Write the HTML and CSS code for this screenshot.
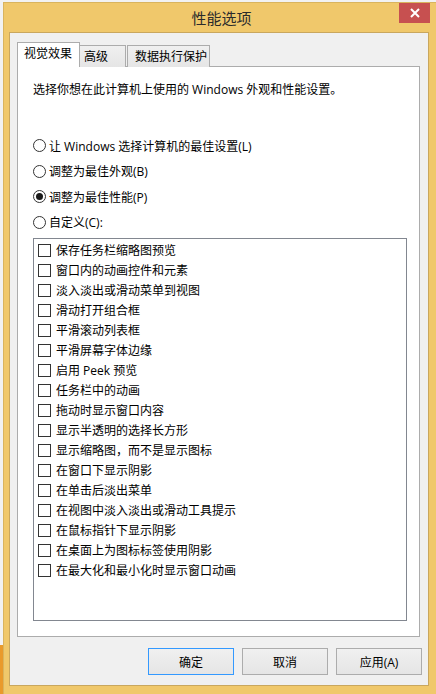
FILE: index.html
```html
<!DOCTYPE html>
<html lang="zh-CN">
<head>
<meta charset="utf-8">
<title>性能选项</title>
<link rel="stylesheet" href="styles.css">
</head>
<body>
<div class="window">
  <div class="titlebar">
    <span class="title">性能选项</span>
    <div class="close">
      <svg width="12" height="12" viewBox="0 0 12 12"><path d="M2 2 L10 10 M10 2 L2 10" stroke="#fff" stroke-width="2"/></svg>
    </div>
  </div>
  <div class="client">
    <div class="tabs">
      <div class="tab active">视觉效果</div>
      <div class="tab">高级</div>
      <div class="tab tab3">数据执行保护</div>
    </div>
    <div class="panel">
      <p class="desc">选择你想在此计算机上使用的 Windows 外观和性能设置。</p>
      <div class="radios">
        <div class="radio"><span class="dot"></span>让 Windows 选择计算机的最佳设置(L)</div>
        <div class="radio"><span class="dot"></span>调整为最佳外观(B)</div>
        <div class="radio"><span class="dot checked"></span>调整为最佳性能(P)</div>
        <div class="radio"><span class="dot"></span>自定义(C):</div>
      </div>
      <div class="listbox">
        <div class="item"><span class="box"></span>保存任务栏缩略图预览</div>
        <div class="item"><span class="box"></span>窗口内的动画控件和元素</div>
        <div class="item"><span class="box"></span>淡入淡出或滑动菜单到视图</div>
        <div class="item"><span class="box"></span>滑动打开组合框</div>
        <div class="item"><span class="box"></span>平滑滚动列表框</div>
        <div class="item"><span class="box"></span>平滑屏幕字体边缘</div>
        <div class="item"><span class="box"></span>启用 Peek 预览</div>
        <div class="item"><span class="box"></span>任务栏中的动画</div>
        <div class="item"><span class="box"></span>拖动时显示窗口内容</div>
        <div class="item"><span class="box"></span>显示半透明的选择长方形</div>
        <div class="item"><span class="box"></span>显示缩略图，而不是显示图标</div>
        <div class="item"><span class="box"></span>在窗口下显示阴影</div>
        <div class="item"><span class="box"></span>在单击后淡出菜单</div>
        <div class="item"><span class="box"></span>在视图中淡入淡出或滑动工具提示</div>
        <div class="item"><span class="box"></span>在鼠标指针下显示阴影</div>
        <div class="item"><span class="box"></span>在桌面上为图标标签使用阴影</div>
        <div class="item"><span class="box"></span>在最大化和最小化时显示窗口动画</div>
      </div>
    </div>
    <div class="buttons">
      <div class="btn default">确定</div>
      <div class="btn">取消</div>
      <div class="btn">应用(A)</div>
    </div>
  </div>
</div>
</body>
</html>
```

FILE: styles.css
```css
html, body {
  margin: 0;
  padding: 0;
}
body {
  width: 436px;
  height: 694px;
  overflow: hidden;
  padding: 2px 0 0 3px;
  box-sizing: border-box;
  background: linear-gradient(to bottom, #f2f2f2 0, #f2f2f2 645px, #e99a2c 645px);
  font-family: "Open Sans", "Noto Sans CJK SC", sans-serif;
  font-size: 12px;
  color: #000;
}
.window {
  width: 433px;
  height: 700px;
  background: #f0c86b;
  box-sizing: border-box;
  border-top: 1px solid #d9b45e;
  border-left: 1px solid #d9b45e;
  padding-left: 5px;
}
.titlebar {
  height: 29px;
  display: flex;
  align-items: flex-start;
  justify-content: center;
  position: relative;
}
.title {
  font-size: 15px;
  line-height: 30px;
  color: #2b2b2b;
  margin-left: -2px;
}
.close {
  position: absolute;
  top: 0;
  right: 6px;
  width: 31px;
  height: 20px;
  background: #c75050;
  display: flex;
  align-items: center;
  justify-content: center;
}
.client {
  width: 420px;
  height: 654px;
  box-sizing: border-box;
  background: #f0f0f0;
  border: 1px solid #c9a75e;
  padding: 9px 6px 0 7px;
}
.tabs {
  display: flex;
  align-items: flex-end;
  height: 25px;
  margin-bottom: -1px;
  position: relative;
  z-index: 1;
}
.tab {
  height: 22px;
  box-sizing: border-box;
  border: 1px solid #acacac;
  border-bottom: none;
  background: linear-gradient(#f0f0f0, #e5e5e5);
  line-height: 21px;
  padding: 0 16px 0 4px;
  width: 47px;
}
.tab3 {
  width: 83px;
  margin-left: 1px;
  padding: 0 0 0 7px;
}
.tab.active {
  height: 25px;
  width: 63px;
  background: #fff;
  border-right: 1px solid #acacac;
  padding: 0 0 0 6px;
  line-height: 22px;
  margin-right: -1px;
}
.tab.active + .tab {
  border-left: 1px solid #acacac;
}
.panel {
  width: 403px;
  height: 571px;
  box-sizing: border-box;
  background: #fff;
  border: 1px solid #acacac;
  padding: 0 0 0 15px;
}
.desc {
  margin: 15px 0 0 0;
  line-height: 16px;
  white-space: nowrap;
}
.radios {
  margin-top: 35px;
}
.radio {
  height: 25.5px;
  display: flex;
  align-items: center;
  white-space: nowrap;
}
.dot {
  width: 13px;
  height: 13px;
  box-sizing: border-box;
  border: 1px solid #333;
  border-radius: 50%;
  margin-right: 3px;
  background: #fff;
  display: flex;
  align-items: center;
  justify-content: center;
  flex: none;
}
.dot.checked::after {
  content: "";
  width: 7px;
  height: 7px;
  border-radius: 50%;
  background: #1a1a1a;
}
.listbox {
  margin-top: 3px;
  width: 374px;
  height: 383px;
  box-sizing: border-box;
  border: 1px solid #828790;
  padding: 1px 0 0 4px;
}
.item {
  height: 20px;
  display: flex;
  align-items: center;
  white-space: nowrap;
}
.box {
  width: 13px;
  height: 13px;
  box-sizing: border-box;
  border: 1px solid #333;
  background: #fff;
  margin-right: 5px;
  flex: none;
}
.buttons {
  display: flex;
  justify-content: flex-end;
  gap: 8px;
  margin-top: 11px;
}
.btn {
  width: 86px;
  height: 27px;
  box-sizing: border-box;
  border: 1px solid #acacac;
  background: linear-gradient(#f0f0f0, #e5e5e5);
  display: flex;
  align-items: center;
  justify-content: center;
}
.btn.default {
  border-color: #3399ff;
}
```
